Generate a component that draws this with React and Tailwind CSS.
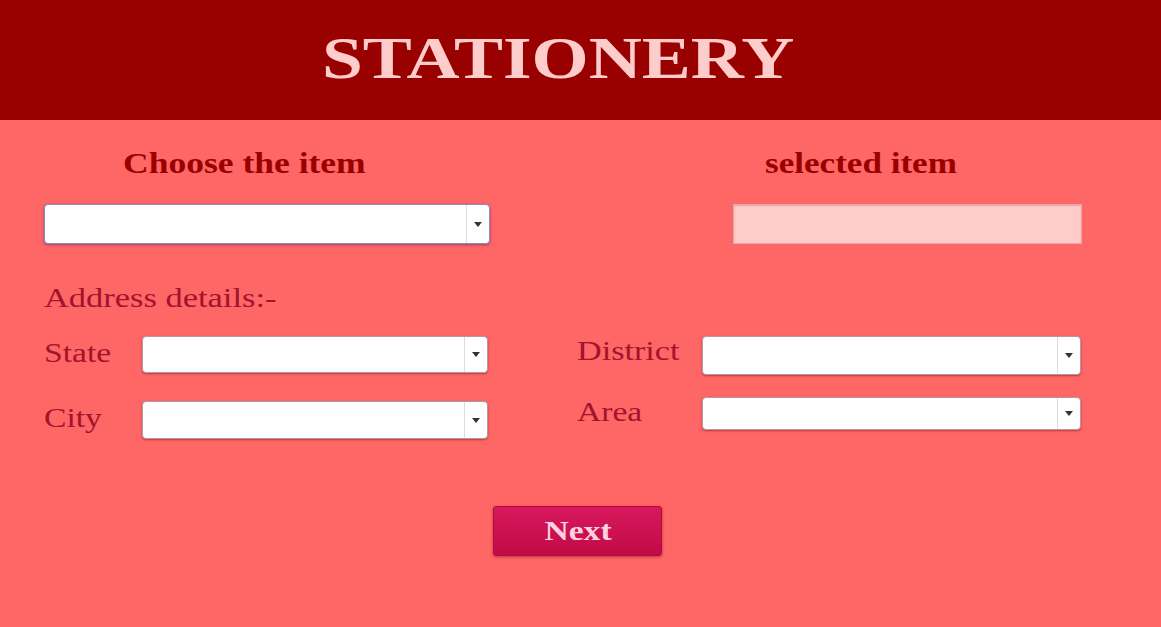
import React from "react";

function Arrow() {
  return (
    <div className="flex w-[23px] items-center justify-center border-l border-[#dcdcdc]">
      <svg width="8" height="5" viewBox="0 0 8 5">
        <path d="M0 0 L8 0 L4 5 Z" fill="#333333" />
      </svg>
    </div>
  );
}

function Select({ cls }) {
  return (
    <div className={`flex rounded-[4px] border border-[#b49a9e] bg-white shadow-[0_1px_2px_rgba(110,0,20,0.45)] ${cls}`}>
      <div className="flex-1" />
      <Arrow />
    </div>
  );
}

export default function App() {
  const serif = { fontFamily: '"Liberation Serif", "Times New Roman", serif' };
  return (
    <div style={serif} className="w-[1161px] min-h-[627px] bg-[#ff6666]">
      <div className="flex h-[120px] items-center bg-[#990000]">
        <span className="-mt-[4px] ml-[322px] inline-block origin-left scale-x-[1.245] text-[59px] font-bold leading-none text-[#ffcccc]">
          STATIONERY
        </span>
      </div>

      <div className="pl-[44px] pt-[26px]">
        <div className="flex">
          <div className="w-[446px]">
            <div className="h-[34px] pl-[79px] leading-[34px]">
              <span className="inline-block origin-left scale-x-[1.225] text-[29px] font-bold text-[#990000]">
                Choose the item
              </span>
            </div>
            <div className="mt-[24px] flex h-[40px] w-[446px] rounded-[4px] border border-[#8c8cb4] bg-white shadow-[0_1px_3px_rgba(60,40,120,0.55)]">
              <div className="flex-1" />
              <Arrow />
            </div>
          </div>
          <div className="ml-[243px] w-[349px]">
            <div className="h-[34px] pl-[32px] leading-[34px]">
              <span className="inline-block origin-left scale-x-[1.21] text-[29px] font-bold text-[#990000]">
                selected item
              </span>
            </div>
            <div className="mt-[24px] h-[40px] w-[349px] border border-[#eaa6a6] bg-[#ffcccc] shadow-[inset_0_1px_2px_rgba(150,40,40,0.25)]" />
          </div>
        </div>

        <div className="mt-[37px] h-[34px] leading-[34px]">
          <span className="inline-block origin-left scale-x-[1.23] text-[28px] text-[#a3132d]">
            Address details:-
          </span>
        </div>

        <div className="mt-[21px] flex">
          <div className="w-[444px]">
            <div className="flex h-[37px] items-start">
              <div className="h-[34px] w-[98px] leading-[34px]">
                <span className="inline-block origin-left scale-x-[1.2] text-[28px] text-[#a3132d]">State</span>
              </div>
              <Select cls="h-[37px] w-[346px]" />
            </div>
            <div className="mt-[28px] flex h-[38px] items-start">
              <div className="h-[34px] w-[98px] leading-[34px]">
                <span className="inline-block origin-left scale-x-[1.2] text-[28px] text-[#a3132d]">City</span>
              </div>
              <Select cls="h-[38px] w-[346px]" />
            </div>
          </div>

          <div className="ml-[89px]">
            <div className="flex h-[39px] items-start">
              <div className="-mt-[2px] h-[34px] w-[125px] leading-[34px]">
                <span className="inline-block origin-left scale-x-[1.22] text-[28px] text-[#a3132d]">District</span>
              </div>
              <Select cls="h-[39px] w-[379px]" />
            </div>
            <div className="mt-[22px] flex h-[33px] items-start">
              <div className="-mt-[2px] h-[34px] w-[125px] leading-[34px]">
                <span className="inline-block origin-left scale-x-[1.2] text-[28px] text-[#a3132d]">Area</span>
              </div>
              <Select cls="h-[33px] w-[379px]" />
            </div>
          </div>
        </div>

        <div className="ml-[449px] mt-[67px] flex h-[50px] w-[169px] items-center justify-center rounded-[3px] border border-[#b3093f] bg-gradient-to-b from-[#d8185c] to-[#c00a46] shadow-[0_1px_3px_rgba(120,0,30,0.5)]">
          <span className="inline-block origin-center scale-x-[1.2] text-[28px] font-bold leading-none text-[#ffd0e0]">
            Next
          </span>
        </div>
      </div>
    </div>
  );
}
